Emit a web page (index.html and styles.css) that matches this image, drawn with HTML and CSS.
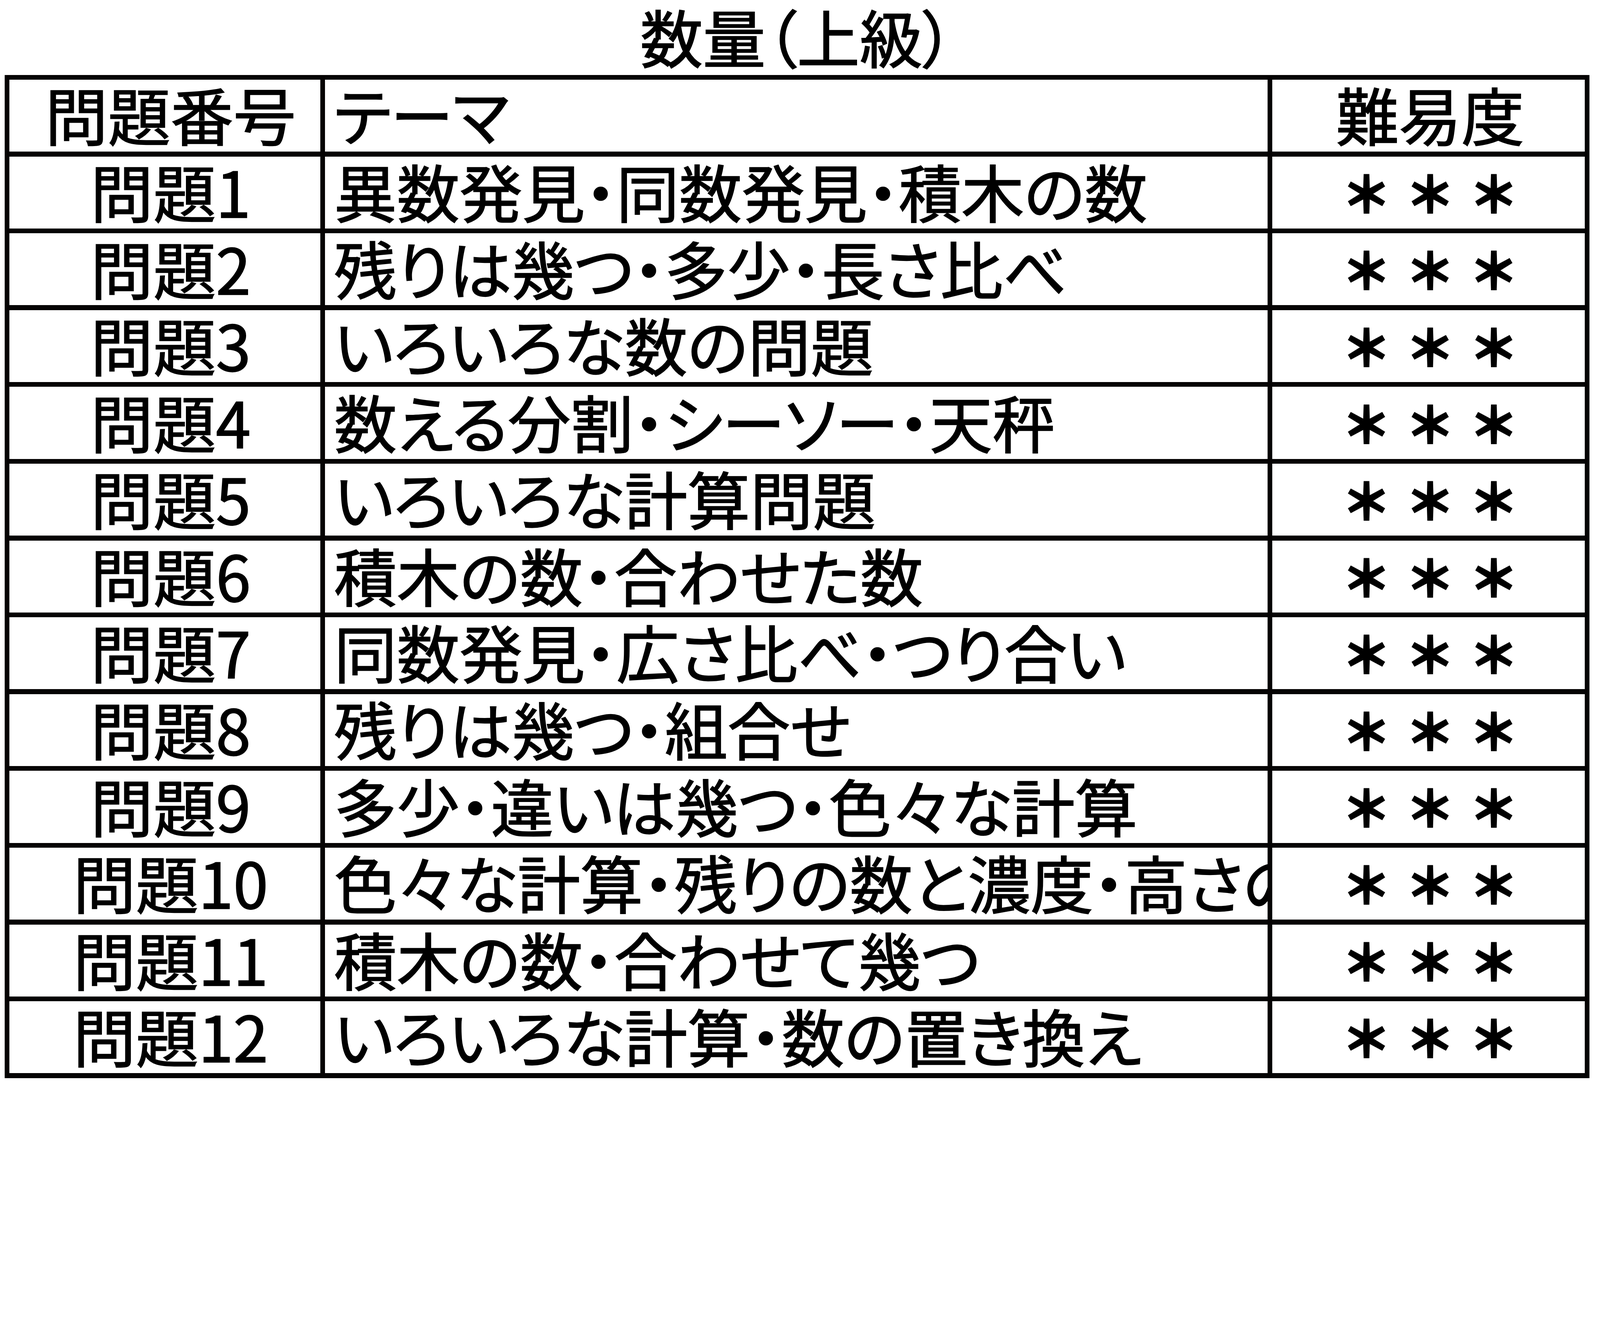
FILE: index.html
```html
<!DOCTYPE html>
<html lang="ja">
<head>
<meta charset="utf-8">
<title>数量(上級)</title>
<link rel="stylesheet" href="styles.css">
</head>
<body>
<div class="page">
  <h1 class="title">数量（上級）</h1>
  <div class="sheet">
    <div class="cell c1">問題番号</div>
    <div class="cell c2">テーマ</div>
    <div class="cell c3">難易度</div>

    <div class="cell c1">問題1</div>
    <div class="cell c2">異数発見・同数発見・積木の数</div>
    <div class="cell c3"><span class="stars">＊＊＊</span></div>

    <div class="cell c1">問題2</div>
    <div class="cell c2">残りは幾つ・多少・長さ比べ</div>
    <div class="cell c3"><span class="stars">＊＊＊</span></div>

    <div class="cell c1">問題3</div>
    <div class="cell c2">いろいろな数の問題</div>
    <div class="cell c3"><span class="stars">＊＊＊</span></div>

    <div class="cell c1">問題4</div>
    <div class="cell c2">数える分割・シーソー・天秤</div>
    <div class="cell c3"><span class="stars">＊＊＊</span></div>

    <div class="cell c1">問題5</div>
    <div class="cell c2">いろいろな計算問題</div>
    <div class="cell c3"><span class="stars">＊＊＊</span></div>

    <div class="cell c1">問題6</div>
    <div class="cell c2">積木の数・合わせた数</div>
    <div class="cell c3"><span class="stars">＊＊＊</span></div>

    <div class="cell c1">問題7</div>
    <div class="cell c2">同数発見・広さ比べ・つり合い</div>
    <div class="cell c3"><span class="stars">＊＊＊</span></div>

    <div class="cell c1">問題8</div>
    <div class="cell c2">残りは幾つ・組合せ</div>
    <div class="cell c3"><span class="stars">＊＊＊</span></div>

    <div class="cell c1">問題9</div>
    <div class="cell c2">多少・違いは幾つ・色々な計算</div>
    <div class="cell c3"><span class="stars">＊＊＊</span></div>

    <div class="cell c1">問題10</div>
    <div class="cell c2">色々な計算・残りの数と濃度・高さの比較</div>
    <div class="cell c3"><span class="stars">＊＊＊</span></div>

    <div class="cell c1">問題11</div>
    <div class="cell c2">積木の数・合わせて幾つ</div>
    <div class="cell c3"><span class="stars">＊＊＊</span></div>

    <div class="cell c1">問題12</div>
    <div class="cell c2">いろいろな計算・数の置き換え</div>
    <div class="cell c3"><span class="stars">＊＊＊</span></div>
  </div>
</div>
</body>
</html>
```

FILE: styles.css
```css
html, body {
  margin: 0;
  padding: 0;
  background: #ffffff;
}

.page {
  padding-left: 11.5px;
  font-family: "Noto Sans CJK JP", "Noto Sans CJK SC", sans-serif;
  color: #000000;
  font-feature-settings: "palt";
  -webkit-text-stroke: 2.4px #000000;
}

.title {
  width: 4057.5px;
  height: 171.2px;
  margin: 0 0 20.5px 0;
  padding-top: 11px;
  box-sizing: border-box;
  font-size: 160.6px;
  font-weight: 400;
  line-height: 160px;
  text-align: center;
}

.sheet {
  display: grid;
  grid-template-columns: 796.3px 2412.5px 799.5px;
  grid-auto-rows: 184.3px;
  gap: 12.3px;
  padding: 12.3px;
  width: max-content;
  background: #050303;
}

.cell {
  background: #ffffff;
  display: flex;
  align-items: center;
  box-sizing: border-box;
  padding-bottom: 11px;
  overflow: hidden;
  white-space: nowrap;
  font-size: 160.6px;
  font-weight: 400;
  line-height: 1;
}

.c1 {
  justify-content: center;
  padding-left: 29.5px;
}

.c2 {
  padding-left: 22.9px;
}

.c3 {
  justify-content: center;
  padding-left: 8.2px;
}

.stars {
  font-feature-settings: normal;
  font-size: 125px;
  font-weight: 700;
  letter-spacing: 38px;
  margin-right: -38px;
  padding-top: 4px;
  -webkit-text-stroke: 5px #000000;
}
```
